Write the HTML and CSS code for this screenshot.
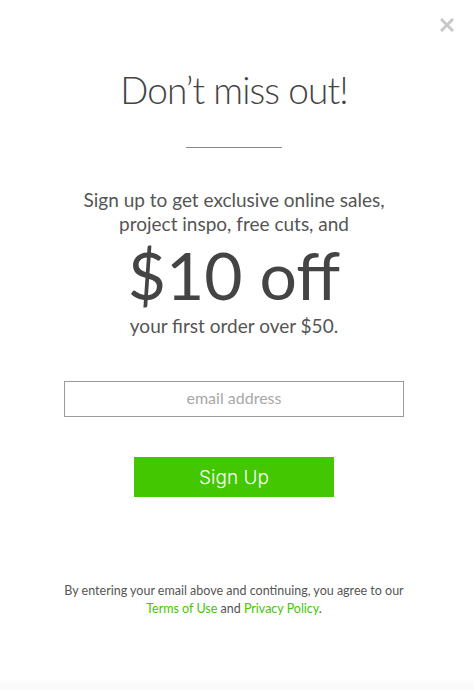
FILE: index.html
```html
<!DOCTYPE html>
<html>
<head>
<meta charset="utf-8">
<link rel="stylesheet" href="styles.css">
</head>
<body>
<div class="modal">
  <button class="close" aria-label="Close">
    <svg width="14" height="14" viewBox="0 0 14 14"><path d="M2 2L12 12M12 2L2 12" stroke="#c8c8c8" stroke-width="3" stroke-linecap="square"/></svg>
  </button>
  <h1 class="title">Don’t miss out!</h1>
  <hr class="divider">
  <p class="lead">Sign up to get exclusive online sales,<br>project inspo, free cuts, and</p>
  <p class="offer">$10 off</p>
  <p class="lead sub">your first order over $50.</p>
  <form class="form">
    <input class="email" type="email" placeholder="email address">
    <button class="signup" type="button">Sign Up</button>
  </form>
  <p class="legal">By entering your email above and continuing, you agree to our<br><a href="#">Terms of Use</a> and <a href="#">Privacy Policy</a>.</p>
</div>
</body>
</html>
```
FILE: styles.css
```css
html, body {
  margin: 0;
  padding: 0;
  background: #fff;
}
body {
  height: 690px;
  background: linear-gradient(to bottom, #fff 0, #fff 679px, #fbfbfb 682px, #fbfbfb 690px);
  font-family: Lato, "Liberation Sans", sans-serif;
  color: #444;
}
.modal {
  position: relative;
  display: flex;
  flex-direction: column;
  align-items: center;
  padding-top: 68px;
  padding-right: 6px;
}
.close {
  position: absolute;
  top: 18px;
  right: 20px;
  border: 0;
  background: none;
  padding: 0;
  width: 14px;
  height: 14px;
}
.close svg { display: block; }
.title {
  margin: 0;
  font-family: Lato, sans-serif;
  font-weight: 300;
  font-size: 37px;
  line-height: 44px;
  color: #444;
  letter-spacing: -0.9px;
}
.divider {
  width: 96px;
  margin: 35px 0 0;
  border: 0;
  border-top: 1px solid #888;
}
.lead {
  margin: 40px 0 0;
  font-size: 19px;
  font-weight: 400;
  line-height: 24px;
  text-align: center;
  color: #555;
}
.offer {
  margin: 2px 0 0;
  font-size: 66px;
  font-weight: 400;
  line-height: 74px;
  color: #444;
}
.lead.sub {
  margin-top: 2px;
}
.form {
  display: flex;
  flex-direction: column;
  align-items: center;
  margin-top: 43px;
}
.email {
  box-sizing: border-box;
  width: 340px;
  height: 36px;
  border: 1px solid #9a9a9a;
  text-align: center;
  font-family: Lato, sans-serif;
  font-size: 16px;
  color: #444;
  padding: 0 0 4px;
  outline: none;
}
.email::placeholder {
  color: #a8a8a8;
}
.signup {
  margin-top: 40px;
  width: 200px;
  height: 40px;
  border: 0;
  background: #42c700;
  color: #fff;
  font-family: Inter, sans-serif;
  font-weight: 300;
  font-size: 19px;
}
.legal {
  margin: 85px 0 0;
  font-size: 12.5px;
  line-height: 18px;
  text-align: center;
  color: #555;
}
.legal a {
  color: #42c700;
  text-decoration: none;
}
```
